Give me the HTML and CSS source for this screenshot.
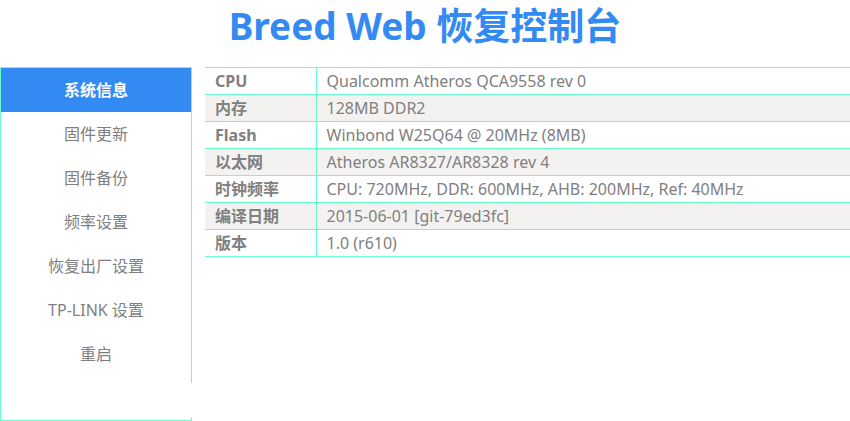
FILE: index.html
```html
<!DOCTYPE html>
<html lang="zh-CN">
<head>
<meta charset="utf-8">
<title>Breed Web 恢复控制台</title>
<link rel="stylesheet" href="styles.css">
</head>
<body>
<h1 class="title">Breed Web 恢复控制台</h1>
<div class="layout">
<nav class="menu">
<a class="item active" href="#info">系统信息</a>
<a class="item" href="#update">固件更新</a>
<a class="item" href="#backup">固件备份</a>
<a class="item" href="#freq">频率设置</a>
<a class="item" href="#factory">恢复出厂设置</a>
<a class="item" href="#tplink">TP-LINK 设置</a>
<a class="item" href="#reboot">重启</a>
<div class="cover"></div>
</nav>
<main class="content">
<table class="info">
<tbody>
<tr><th scope="row">CPU</th><td>Qualcomm Atheros QCA9558 rev 0</td></tr>
<tr><th scope="row">内存</th><td>128MB DDR2</td></tr>
<tr><th scope="row">Flash</th><td>Winbond W25Q64 @ 20MHz (8MB)</td></tr>
<tr><th scope="row">以太网</th><td>Atheros AR8327/AR8328 rev 4</td></tr>
<tr><th scope="row">时钟频率</th><td>CPU: 720MHz, DDR: 600MHz, AHB: 200MHz, Ref: 40MHz</td></tr>
<tr><th scope="row">编译日期</th><td>2015-06-01 [git-79ed3fc]</td></tr>
<tr><th scope="row">版本</th><td>1.0 (r610)</td></tr>
</tbody>
</table>
</main>
</div>
</body>
</html>
```
FILE: styles.css
```css
* {
  box-sizing: border-box;
}

body {
  margin: 0;
  background: #fff;
  color: #808080;
  font: 16px/26px "Noto Sans", "Noto Sans CJK SC", sans-serif;
}

.title {
  margin: 0 0 15px;
  color: #338af3;
  font-size: 37px;
  line-height: 52px;
  text-align: center;
}

.layout {
  display: flex;
  align-items: flex-start;
  gap: 13px;
}

.menu {
  position: relative;
  flex: 0 0 192px;
  padding-bottom: 44px;
  border: 1px solid #66ffcc;
}

.item {
  display: block;
  color: #808080;
  line-height: 44px;
  text-align: center;
  text-decoration: none;
}

.active {
  background: #338af3;
  color: #fff;
  font-weight: bold;
}

.cover {
  position: absolute;
  right: -1px;
  bottom: 3px;
  width: 1px;
  height: 34px;
  background: #fff;
}

.content {
  flex: 1;
}

.info {
  width: 100%;
  border-collapse: collapse;
}

.info tr {
  border-top: 1px solid #66ffcc;
  border-bottom: 1px solid #66ffcc;
}

.info tr:nth-child(even) {
  background: #f4f2f1;
}

.info th {
  width: 111px;
  padding: 0 10px;
  border-right: 1px solid #66ffcc;
  text-align: left;
}

.info td {
  padding: 0 10px;
}
```
